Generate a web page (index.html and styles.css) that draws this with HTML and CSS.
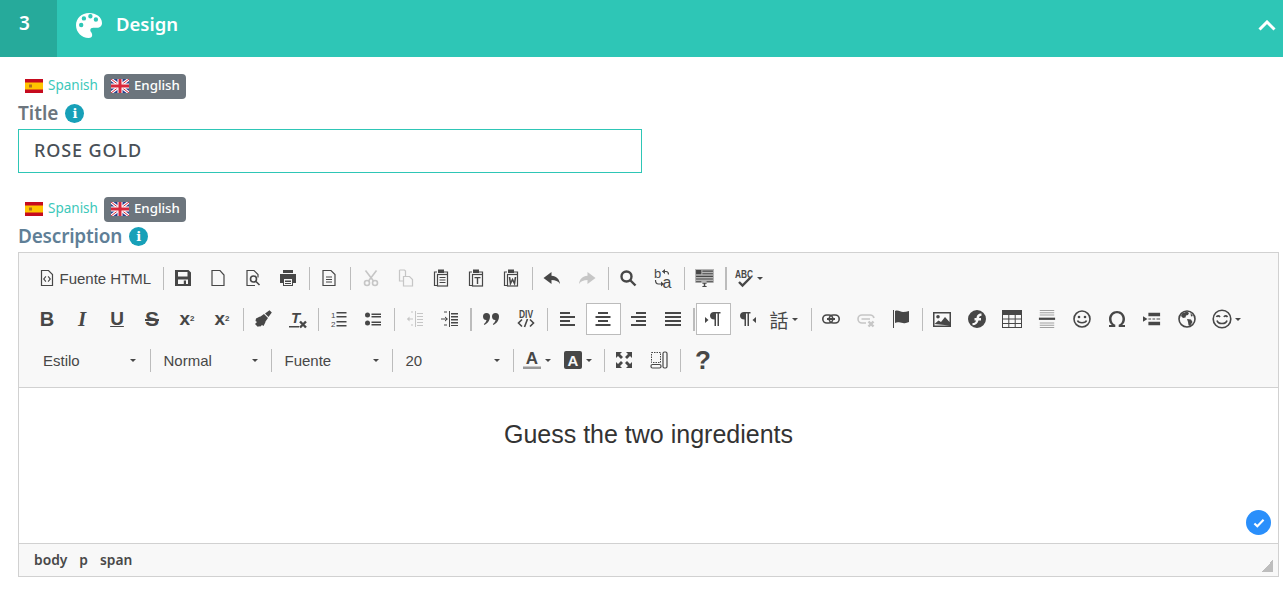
FILE: index.html
```html
<!DOCTYPE html>
<html lang="en">
<head>
<meta charset="utf-8">
<title>Design</title>
<link rel="stylesheet" href="styles.css">
</head>
<body>
<header class="bar">
  <div class="step">3</div>
  <svg class="palette" viewBox="0 0 26 25"><path fill-rule="evenodd" d="M13 0C5.800 0 0 5.300 0 12.300 0 19.300 5.600 25 12.600 25c2.400 0 3.600-1.500 3.600-3.100 0-2.500-1.900-2.800-1.900-4.700 0-1.800 1.300-2.500 3-2.500h3.700c3 0 5-2 5-4.800C26 4.300 20.300 0 13 0zM5.200 14.200a2.200 2.200 0 1 1 0-4.400 2.200 2.200 0 0 1 0 4.400zm2.700-6.600a2.200 2.200 0 1 1 0-4.400 2.200 2.200 0 0 1 0 4.400zm6.500-2.200a2.200 2.200 0 1 1 0-4.400 2.200 2.200 0 0 1 0 4.400zm5.500 3.300a2.200 2.200 0 1 1 0-4.400 2.200 2.200 0 0 1 0 4.400z"/></svg>
  <h2 class="bar-title">Design</h2>
  <svg class="chevron" viewBox="0 0 18 11"><path d="M1.500 9.500 9 2l7.500 7.500"/></svg>
</header>

<main class="form">
  <div class="langs">
    <span class="lang"><svg class="flag" viewBox="0 0 18 14"><rect width="18" height="14" fill="#c60b1e"/><rect y="3.500" width="18" height="7" fill="#ffc400"/><rect x="4" y="5.500" width="3" height="3" fill="#ad6f1e"/></svg>Spanish</span>
    <span class="lang active"><svg class="flag" viewBox="0 0 18 14"><rect width="18" height="14" fill="#27408f"/><path d="M0 0l18 14M18 0 0 14" stroke="#fff" stroke-width="3"/><path d="M0 0l18 14M18 0 0 14" stroke="#d8283c" stroke-width="1"/><path d="M9 0v14M0 7h18" stroke="#fff" stroke-width="5"/><path d="M9 0v14M0 7h18" stroke="#d8283c" stroke-width="3"/></svg>English</span>
  </div>
  <label class="label">Title <span class="info">i</span></label>
  <div class="input">ROSE GOLD</div>

  <div class="langs second">
    <span class="lang"><svg class="flag" viewBox="0 0 18 14"><rect width="18" height="14" fill="#c60b1e"/><rect y="3.500" width="18" height="7" fill="#ffc400"/><rect x="4" y="5.500" width="3" height="3" fill="#ad6f1e"/></svg>Spanish</span>
    <span class="lang active"><svg class="flag" viewBox="0 0 18 14"><rect width="18" height="14" fill="#27408f"/><path d="M0 0l18 14M18 0 0 14" stroke="#fff" stroke-width="3"/><path d="M0 0l18 14M18 0 0 14" stroke="#d8283c" stroke-width="1"/><path d="M9 0v14M0 7h18" stroke="#fff" stroke-width="5"/><path d="M9 0v14M0 7h18" stroke="#d8283c" stroke-width="3"/></svg>English</span>
  </div>
  <label class="label slate">Description <span class="info">i</span></label>

  <section class="editor">
    <div class="toolbar">
      <div class="row">
        <span class="btn source"><svg class="ic" viewBox="0 0 18 18"><path class="ln" d="M3.500 1.500h7l4 4v11h-11z"/><path d="M7.500 7 5 10l2.500 3 .8-.7L6.500 10l1.800-2.300zM10.500 7l2.500 3-2.500 3-.8-.7 1.800-2.300-1.800-2.300z"/></svg><span class="btn-label">Fuente HTML</span></span>
        <i class="sep"></i>
        <span class="btn"><svg class="ic" viewBox="0 0 18 18"><path fill-rule="evenodd" d="M1 1h13.500L17 3.500V17H1zM4 3v4.500h9.500V3zM4 10.500V15h10v-4.500zM9.800 11.500h2.200V15H9.800z"/></svg></span>
        <span class="btn"><svg class="ic" viewBox="0 0 18 18"><path class="ln" d="M3 1.500h8l4 4.500v10.500H3z"/></svg></span>
        <span class="btn"><svg class="ic" viewBox="0 0 18 18"><path class="ln" d="M11 16.500H3v-15h7l4 4v3"/><circle class="ln2" cx="9.500" cy="10" r="3"/><path class="ln2" d="m12 12.500 3.500 3.500"/></svg></span>
        <span class="btn"><svg class="ic" viewBox="0 0 18 18"><path fill-rule="evenodd" d="M4 1h10v3H4zM1 5h16v9h-3v3H4v-3H1zM5 10v6h8v-6zM6 11.500h6V13H6zM6 14h6v1H6z"/></svg></span>
        <i class="sep"></i>
        <span class="btn"><svg class="ic" viewBox="0 0 18 18"><path class="ln" d="M3 1.500h8l4 4v11H3z"/><path d="M6 7.500h6v1H6zM6 10h6v1H6zM6 12.500h6v1H6z"/></svg></span>
        <i class="sep wide"></i>
        <span class="btn off"><svg class="ic" viewBox="0 0 18 18"><circle class="ln2" cx="5" cy="14" r="2.500"/><circle class="ln2" cx="13" cy="14" r="2.500"/><path class="ln2" d="M3.500 1.500 11.500 12M14.500 1.500 6.500 12"/></svg></span>
        <span class="btn off"><svg class="ic" viewBox="0 0 18 18"><path class="ln" d="M2.500 1h5l1 1v5M6 12H2.500V1M6.500 7.500h6l3 3v6.500h-9z"/></svg></span>
        <span class="btn"><svg class="ic" viewBox="0 0 18 18"><path class="ln" d="M5 3H2.500v13.500H5"/><path class="ln" d="M12 3h3.500v2"/><rect class="ln" x="5.500" y="5.500" width="10" height="11.500"/><path d="M6 0.500h6V4H6zM7.500 8h6v1h-6zM7.500 10.500h6v1h-6zM7.500 13h6v1h-6z"/></svg></span>
        <span class="btn"><svg class="ic" viewBox="0 0 18 18"><path class="ln" d="M5 3H2.500v13.500H5"/><path class="ln" d="M12 3h3.500v2"/><rect class="ln" x="5.500" y="5.500" width="10" height="11.500"/><path d="M6 0.500h6V4H6zM7.500 8h6v1.300h-2.300V15h-1.400V9.300H7.500z"/></svg></span>
        <span class="btn"><svg class="ic" viewBox="0 0 18 18"><path class="ln" d="M5 3H2.500v13.500H5"/><path class="ln" d="M12 3h3.500v2"/><rect class="ln" x="5.500" y="5.500" width="10" height="11.500"/><path d="M6 0.500h6V4H6z"/><path class="ln2" d="m7.500 8 1 6.500 2-4 2 4 1-6.500"/></svg></span>
        <i class="sep"></i>
        <span class="btn"><svg class="ic" viewBox="0 0 18 18"><path d="M8.500 3 0.500 9l8 6v-4c4 0 6.500 1 8.500 4-.5-5-3.500-8-8.500-8.300z"/></svg></span>
        <span class="btn off"><svg class="ic" viewBox="0 0 18 18"><path d="M9.500 3l8 6-8 6v-4c-4 0-6.500 1-8.500 4 .5-5 3.500-8 8.500-8.300z"/></svg></span>
        <i class="sep"></i>
        <span class="btn"><svg class="ic" viewBox="0 0 18 18"><circle class="ln3" cx="7.500" cy="7.500" r="5"/><path class="ln3" d="m11 11 5.500 5.500"/></svg></span>
        <span class="btn"><svg class="ic tall" viewBox="0 0 18 21"><text class="svg-t" x="0" y="10" font-size="13">b</text><text class="svg-t" x="8.500" y="20" font-size="16">a</text><path class="ln" d="M8.500 3.500H12c1.500 0 2.500 1 2.500 3M1.500 12c0 2 1 4 3 4h2.500"/><path d="M11 1v5L8 3.500zM7 13.500l3 2.500-3 2.500z"/></svg></span>
        <i class="sep"></i>
        <span class="btn"><svg class="ic select" viewBox="0 0 18 18"><rect width="18" height="13" fill="#b5b5b5"/><path d="M1 1h5v4H1zM7 1.500h10v1H7zM7 4h10v1H7zM1 6.500h16v1H1zM1 9h16v1H1zM1 11.500h5v1H1zM11 11.500h6v1h-6zM7 13h4v1H9.700v2H11v1H7v-1h1.300v-2H7z"/></svg></span>
        <i class="sep thick short"></i>
        <span class="btn caret-btn spell"><svg class="ic tall" viewBox="0 0 18 21"><text class="svg-t" x="0" y="9.500" font-size="11.500" font-weight="700" textLength="18" lengthAdjust="spacingAndGlyphs">ABC</text><path class="ln3" d="m4 14 3.500 3.500 8-8"/></svg><b class="caret"></b></span>
      </div>

      <div class="row">
        <span class="btn glyph bold">B</span>
        <span class="btn glyph ital">I</span>
        <span class="btn glyph under">U</span>
        <span class="btn glyph strike">S</span>
        <span class="btn glyph script">x<sub>2</sub></span>
        <span class="btn glyph script">x<sup>2</sup></span>
        <i class="sep"></i>
        <span class="btn"><svg class="ic" viewBox="0 0 18 18"><path d="M11 3.500 15.500.2l2.300 2.300-3.300 4.500zM2 8.500l3.500-1.800 1-.2L10 4l4 4-2.500 3.500-.2 1L9.500 16 8 15 6 16.800 5 16l-1 1L1 14l2-2-1.500-1z"/></svg></span>
        <span class="btn"><svg class="ic" viewBox="0 0 18 18"><text class="svg-t" x="2" y="13" font-size="15" font-weight="700" font-style="italic">T</text><path d="M0 16h10v1.500H0z"/><path class="ln3" d="m11 11.500 6 6m0-6-6 6"/></svg></span>
        <i class="sep narrow"></i>
        <span class="btn shift"><svg class="ic" viewBox="0 0 18 18"><text class="svg-t" x="1" y="8" font-size="8">1</text><text class="svg-t" x="1" y="16.500" font-size="8">2</text><path d="M6.500 2h10v1.500h-10zM6.500 6h10v1.500h-10zM6.500 11h10v1.500h-10zM6.500 15h10v1.500h-10z"/></svg></span>
        <span class="btn"><svg class="ic" viewBox="0 0 18 18"><circle cx="3.500" cy="5" r="2.500"/><circle cx="3.500" cy="13" r="2.500"/><path d="M7.500 3.500H17v1.400H7.500zM7.500 6H17v1.400H7.500zM7.500 11.500H17v1.400H7.500zM7.500 14H17v1.400H7.500z"/></svg></span>
        <i class="sep wide"></i>
        <span class="btn off"><svg class="ic" viewBox="0 0 18 18"><path d="M9 1h1v16H9zM11 3h6v1h-6zM11 6h6v1h-6zM11 9h6v1h-6zM11 12h6v1h-6zM11 15h6v1h-6zM5 1.500h2v1H5zM5 14.500h2v1H5zM1 8.500h6v1H1zM1 9 3.500 6.500v5z"/></svg></span>
        <span class="btn"><svg class="ic" viewBox="0 0 18 18"><path d="M8 1h1v16H8zM10 3h7v1.500h-7zM10 6h7v1.500h-7zM10 9h7v1.500h-7zM10 12h7v1.500h-7zM10 15h7v1h-7zM3 1.500h3v1H3zM3 14.500h3v1H3zM0 8.500h5v1H0zM7 9 4 6.500v5z"/></svg></span>
        <i class="sep thick"></i>
        <span class="btn"><svg class="ic" viewBox="0 0 18 18"><path d="M4.500 3A3.500 3.500 0 0 1 8 6.500c0 4-2.500 7-5.500 8.500l-.7-1c1.500-1 2.500-2.500 2.700-4C2 10.200 1 8.500 1 6.500A3.500 3.500 0 0 1 4.500 3zM13.500 3A3.500 3.500 0 0 1 17 6.500c0 4-2.500 7-5.500 8.500l-.7-1c1.500-1 2.500-2.500 2.700-4-2.500.2-3.500-1.500-3.500-3.500A3.500 3.500 0 0 1 13.500 3z"/></svg></span>
        <span class="btn"><svg class="ic" viewBox="0 0 18 18"><text class="svg-t" x="2" y="8" font-size="10.500" font-weight="700" textLength="14" lengthAdjust="spacingAndGlyphs">DIV</text><path class="ln2" d="M5 9.500 1.500 13 5 16.500M13 9.500l3.500 3.500-3.500 3.500M10.500 9l-3 8"/></svg></span>
        <i class="sep wide"></i>
        <span class="btn"><svg class="ic" viewBox="0 0 18 18"><path d="M1 2h10v2H1zM1 6h15v2H1zM1 10h10v2H1zM1 14h15v2H1z"/></svg></span>
        <span class="btn on"><svg class="ic" viewBox="0 0 18 18"><path d="M4 2h10v2H4zM1.500 6h15v2h-15zM4 10h10v2H4zM1.500 14h15v2h-15z"/></svg></span>
        <span class="btn"><svg class="ic" viewBox="0 0 18 18"><path d="M7 2h10v2H7zM2 6h15v2H2zM7 10h10v2H7zM2 14h15v2H2z"/></svg></span>
        <span class="btn"><svg class="ic" viewBox="0 0 18 18"><path d="M1 2h16v2H1zM1 6h16v2H1zM1 10h16v2H1zM1 14h16v2H1z"/></svg></span>
        <i class="sep thick tight"></i>
        <span class="btn on"><svg class="ic" viewBox="0 0 18 18"><path d="M1 7l3.500 3L1 13zM10 2h6.500v1.500H15V16h-1.500V3.500H12V16h-1.500V9.500C7.500 9.500 6 8 6 5.800S7.500 2 10 2z"/></svg></span>
        <span class="btn"><svg class="ic" viewBox="0 0 18 18"><path d="M17 7l-3.500 3L17 13zM5 2h6.500v1.500H10V16H8.500V3.500H7V16H5.500V9.500C2.500 9.500 1 8 1 5.800S2.500 2 5 2z"/></svg></span>
        <span class="btn caret-btn lang-btn"><span class="kanji">話</span><b class="caret"></b></span>
        <i class="sep narrow"></i>
        <span class="btn"><svg class="ic" viewBox="0 0 18 18"><rect class="ln2" x="0.800" y="5" width="10" height="8" rx="4"/><rect class="ln2" x="7.200" y="5" width="10" height="8" rx="4"/><path d="M5 8h8v2H5z"/></svg></span>
        <span class="btn off"><svg class="ic" viewBox="0 0 18 18"><path class="ln2" d="M9 13H5a4 4 0 0 1 0-8h8a4 4 0 0 1 4 3M4.500 9H13"/><path class="ln3" d="m11.500 11.500 5 5m0-5-5 5"/></svg></span>
        <span class="btn"><svg class="ic" viewBox="0 0 18 18"><path d="M1 0h1v18H1zM3 1c3-1.500 5.500 1 8 1 2 0 4-.5 6-1v11c-2 1-4 1.500-6 1-3 0-5-1.500-8 0z"/></svg></span>
        <i class="sep"></i>
        <span class="btn"><svg class="ic" viewBox="0 0 18 18"><path fill-rule="evenodd" d="M0 2h18v15H0zM1.500 3.500V15.500H16.500V3.500zM5 5a1.800 1.800 0 1 0 0 3.600A1.800 1.800 0 0 0 5 5zM1.500 14l4-3.500 2.500 1.500 4-5 4.500 5v3.500z"/></svg></span>
        <span class="btn"><svg class="ic" viewBox="0 0 18 18"><path fill-rule="evenodd" d="M9 0a9 9 0 1 1 0 18A9 9 0 0 1 9 0zM13.500 3.500c-3.500 0-4.500 1.500-5 4.500H6.500v2.500h1.500C7.500 12.500 6.500 13 4.500 13v2.200c3.200 0 5.200-1.500 6-4.700H13V8h-2c.3-1.500 1-2.200 2.500-2.200z"/></svg></span>
        <span class="btn"><svg class="ic table" viewBox="0 0 20 18"><path fill-rule="evenodd" d="M0 0h20v18H0zM1 5v3.500h5.300V5zM7.300 5v3.500h5.400V5zM13.700 5v3.500H19V5zM1 9.500V13h5.300V9.500zM7.300 9.500V13h5.400V9.500zM13.700 9.500V13H19V9.500zM1 14v3h5.300v-3zM7.300 14v3h5.400v-3zM13.700 14v3H19v-3z"/></svg></span>
        <span class="btn"><svg class="ic table" viewBox="0 0 18 20"><path opacity=".5" d="M1 0h16v1H1zM1 2.500h16v1H1zM1 5h16v1H1zM1 14h16v1H1zM1 16.500h16v1H1zM1 19h16v1H1z"/><path d="M0 8.500h18v2.500H0z"/></svg></span>
        <span class="btn"><svg class="ic" viewBox="0 0 18 18"><circle class="ln2" cx="9" cy="9" r="8"/><circle cx="6" cy="7" r="1.300"/><circle cx="12" cy="7" r="1.300"/><path class="ln2" d="M4.500 10.500c1 3 8 3 9 0"/></svg></span>
        <span class="btn"><svg class="ic" viewBox="0 0 18 18"><path d="M1 17v-2h2.800C2 13.500 1 11.500 1 9c0-4.500 3.500-8 8-8s8 3.500 8 8c0 2.500-1 4.500-2.800 6H17v2h-6.300v-2.200c2.200-.8 3.800-3 3.800-5.800 0-3.400-2.300-5.800-5.500-5.800S3.500 5.600 3.500 9c0 2.800 1.600 5 3.800 5.800V17z"/></svg></span>
        <span class="btn"><svg class="ic" viewBox="0 0 20 18"><path d="M6 2h13v4H6zM6 12h13v4H6zM0 6l5 3-5 3zM6 8.500h3v1H6zM10.500 8.500h3v1h-3zM15 8.500h4v1h-4z"/></svg></span>
        <span class="btn"><svg class="ic" viewBox="0 0 18 18"><circle class="ln2" cx="9" cy="9" r="8"/><path d="M4 3.500 9 1.500l2 1.500-1 2-2 .5-.5 2L5 8 3 6zM9 9l4 .5 1.500 2.500-2.500 4-1.500-1L10 12zM12.500 3l2.500 3-2 .5z"/></svg></span>
        <span class="btn caret-btn emoji"><svg class="ic big" viewBox="0 0 20 20"><circle class="ln2" cx="10" cy="10" r="8.800"/><path class="ln2" d="M4.500 8c.5-1.500 2.500-1.500 3.500 0M12 8c.5-1.500 2.500-1.500 3.500 0M5 11.500c1 4 9 4 10 0"/></svg><b class="caret"></b></span>
      </div>

      <div class="row">
        <span class="combo first"><span>Estilo</span><b class="caret"></b></span>
        <i class="sep"></i>
        <span class="combo"><span>Normal</span><b class="caret"></b></span>
        <i class="sep"></i>
        <span class="combo"><span>Fuente</span><b class="caret"></b></span>
        <i class="sep"></i>
        <span class="combo"><span>20</span><b class="caret"></b></span>
        <i class="sep"></i>
        <span class="btn caret-btn color"><svg class="ic" viewBox="0 0 18 18"><text class="svg-t" x="9" y="13" font-size="17" font-weight="700" text-anchor="middle">A</text><path fill="#999" d="M0 15.500h18V18H0z"/></svg><b class="caret"></b></span>
        <span class="btn caret-btn color last"><svg class="ic" viewBox="0 0 18 18"><rect width="18" height="18" rx="2"/><text x="9" y="14.500" font-size="15" font-weight="700" fill="#f8f8f8" text-anchor="middle" class="svg-a">A</text></svg><b class="caret"></b></span>
        <i class="sep"></i>
        <span class="btn"><svg class="ic" viewBox="0 0 18 18"><path d="M1 1h6L5 3l3 3-2 2-3-3-2 2zM17 1v6l-2-2-3 3-2-2 3-3-2-2zM1 17v-6l2 2 3-3 2 2-3 3 2 2zM17 17h-6l2-2-3-3 2-2 3 3 2-2z"/></svg></span>
        <span class="btn"><svg class="ic" viewBox="0 0 18 18"><path class="dash" d="M1.500 1.500h9v10h-9z"/><rect class="ln" x="1" y="13.500" width="10" height="3.500" rx="1.500"/><rect class="ln" x="13" y="1" width="4" height="16" rx="1.500"/></svg></span>
        <i class="sep"></i>
        <span class="btn help">?</span>
      </div>
    </div>

    <div class="content">
      <p class="guess">Guess the two ingredients</p>
      <span class="check"><svg viewBox="0 0 14 12"><path d="M1.500 6.500 5 10l7.500-8"/></svg></span>
    </div>

    <footer class="path">
      <span>body</span><span>p</span><span>span</span>
      <i class="grip"></i>
    </footer>
  </section>
</main>
</body>
</html>
```

FILE: styles.css
```css
* { box-sizing: border-box; }
html, body { margin: 0; background: #fff; }
body { font-family: "Noto Sans", "Open Sans", sans-serif; color: #495057; overflow: hidden; height: 589px; }

.bar { height: 57px; background: #2ec6b6; display: flex; align-items: center; color: #fff; }
.step { width: 57px; height: 57px; background: #26aa9b; font-size: 19px; font-weight: 600; padding: 9px 0 0 19px; line-height: 28px; }
.palette { width: 26px; height: 25px; margin: -7px 0 0 19px; fill: #fff; }
.bar-title { margin: -9px 0 0 14px; font-size: 18.5px; font-weight: 600; line-height: 28px; flex: 1; }
.chevron { width: 18px; height: 11px; margin: -7px 7px 0 0; fill: none; stroke: #fff; stroke-width: 3; }

.form { padding: 17px 4px 0 18px; display: flex; flex-direction: column; align-items: flex-start; }
.langs { display: flex; gap: 6px; padding-left: 7px; height: 25px; align-items: center; }
.langs.second { margin-top: 24px; }
.lang { display: flex; align-items: center; gap: 5px; font-size: 13.5px; color: #3cc8ba; height: 25px; padding-bottom: 3px; }
.lang.active { background: #6c757d; color: #fff; border-radius: 4px; padding: 0 6px 3px 7px; font-weight: 500; font-size: 13.3px; }
.flag { width: 18px; height: 14px; display: block; margin-top: 2px; }
.label { display: flex; align-items: center; gap: 7px; height: 28px; font-size: 19px; font-weight: 600; color: #6c757d; }
.label.slate { color: #5f7f97; letter-spacing: -.2px; }
.info { width: 19px; height: 19px; border-radius: 50%; background: #17a0b8; color: #fff; font-size: 13px; font-weight: 800; line-height: 19px; text-align: center; font-family: "DejaVu Serif", serif; letter-spacing: 0; }

.input { width: 624px; height: 44px; margin-top: 2px; border: 1px solid #2ec6b6; padding-left: 15px; font-size: 18px; font-weight: 500; letter-spacing: .9px; line-height: 41px; color: #495057; }

.editor { width: 1261px; margin-top: 2px; border: 1px solid #d1d1d1; }
.toolbar { background: #f8f8f8; padding: 8px 0 9px 10.5px; border-bottom: 1px solid #d1d1d1; height: 135px; display: flex; flex-direction: column; gap: 7px; }
.row { display: flex; align-items: center; height: 34px; }
.btn { width: 35px; height: 32px; flex: none; display: flex; align-items: center; justify-content: center; color: #474747; border: 1px solid transparent; }
.btn.on { background: #fff; border-color: #bcbcbc; }
.btn.off { opacity: .28; }
.btn.source { width: 130px; justify-content: flex-start; padding-left: 7px; gap: 4px; }
.btn-label { font: 15px/1 "Liberation Sans", Arial, sans-serif; color: #474747; }
.btn.shift { padding-left: 2px; }
.ic { width: 18px; height: 18px; fill: #474747; display: block; flex: none; overflow: visible; }
.ic.tall { height: 21px; }
.ic.big { width: 20px; height: 20px; }
.ic.table { width: 20px; }
.ic.select { width: 19px; height: 19px; }
.ln { fill: none; stroke: #474747; stroke-width: 1.200; }
.ln2 { fill: none; stroke: #474747; stroke-width: 1.600; }
.ln3 { fill: none; stroke: #474747; stroke-width: 2.400; }
.dash { fill: none; stroke: #474747; stroke-width: 1; stroke-dasharray: 1.500 1; }
.svg-t { font-family: "Liberation Sans", Arial, sans-serif; fill: #474747; }
.svg-a { font-family: "Liberation Sans", Arial, sans-serif; }
.sep { width: 1px; height: 23px; background: #bcbcbc; margin: 0 2px 0 3px; flex: none; }
.sep.wide { margin: 0 3px 0 3px; }
.sep.narrow { margin: 0 2px 0 2px; }
.sep.thick { width: 2px; margin: 0 2px; }
.sep.tight { margin: 0 1px 0 2px; }
.sep.short { margin: 0 1px 0 3px; }
.caret { width: 0; height: 0; border: 3px solid transparent; border-top: 3px solid #474747; border-bottom: 0; display: block; flex: none; }
.caret-btn { gap: 4px; }
.btn.spell { justify-content: flex-start; padding-left: 6px; }
.btn.lang-btn { width: 43px; justify-content: flex-start; padding-left: 3px; gap: 3px; }
.kanji { font: 19px/1 "Noto Sans CJK TC", "Noto Sans CJK SC", sans-serif; color: #474747; }
.btn.emoji { width: 40px; justify-content: flex-start; padding-left: 6px; gap: 3px; }
.btn.color { width: 41px; justify-content: flex-start; padding-left: 6px; gap: 4px; }
.btn.color.last { width: 44px; }
.glyph { font-family: "Liberation Sans", Arial, sans-serif; font-size: 20px; font-weight: 700; color: #474747; }
.glyph.ital { font-family: "Liberation Serif", serif; font-style: italic; font-size: 21px; }
.glyph.under { text-decoration: underline; font-size: 19px; }
.glyph.strike { text-decoration: line-through; font-size: 21px; font-weight: 700; }
.glyph.script { font-size: 19px; }
.glyph sub, .glyph sup { font-size: 8px; line-height: 0; }
.help { font: 700 26px/1 "Liberation Sans", Arial, sans-serif; color: #474747; padding-left: 6px; }
.combo { width: 115px; height: 32px; flex: none; display: flex; align-items: center; justify-content: space-between; padding: 0 10px 0 11px; font: 15px/1 "Liberation Sans", Arial, sans-serif; color: #474747; }
.combo.first { width: 117px; padding: 0 10.500px 0 13.500px; }

.content { position: relative; height: 155px; background: #fff; text-align: center; }
.guess { margin: 0; padding-top: 31px; font: 25px/30px "Liberation Sans", Arial, sans-serif; color: #333; }
.check { position: absolute; right: 7px; bottom: 8px; width: 25px; height: 25px; border-radius: 50%; background: #2a8ffb; display: flex; align-items: center; justify-content: center; }
.check svg { width: 12px; height: 10px; fill: none; stroke: #fff; stroke-width: 2.500; }
.path { position: relative; height: 33px; background: #f8f8f8; border-top: 1px solid #d1d1d1; display: flex; align-items: center; gap: 12px; padding: 0 0 2px 15px; font-size: 13.8px; font-weight: 600; color: #484848; }
.grip { position: absolute; right: 5px; bottom: 4px; width: 12px; height: 12px; background: linear-gradient(135deg, transparent 50%, #bdbdbd 50%); }
```
